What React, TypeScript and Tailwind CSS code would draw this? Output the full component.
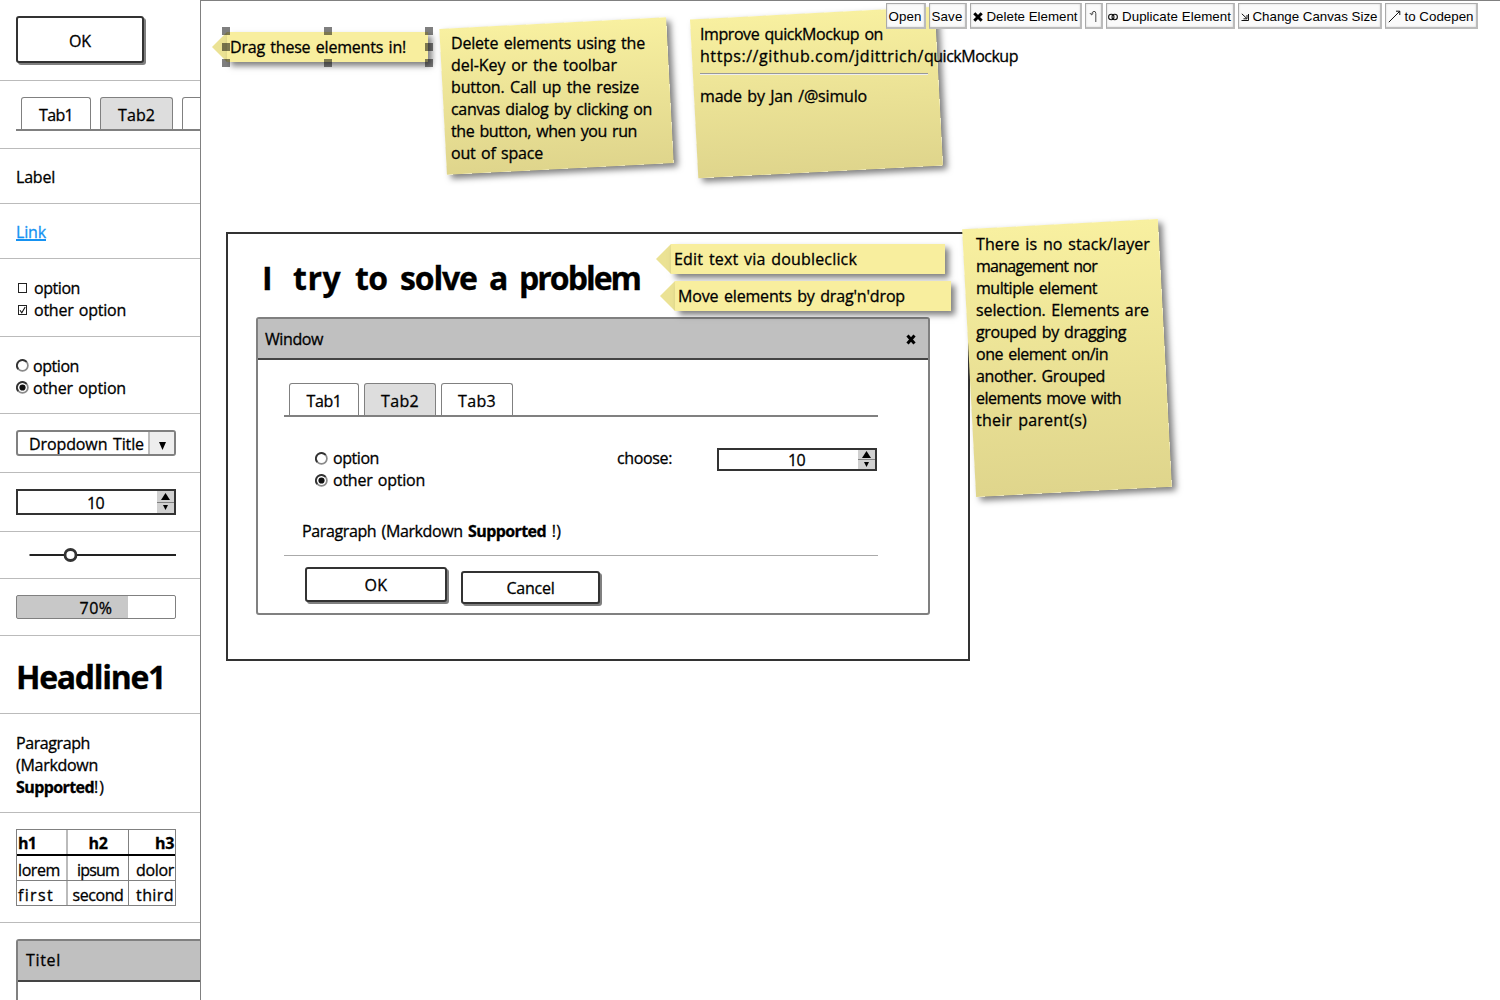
import { useLayoutEffect, useRef, type ReactNode } from "react";

/** A single line of text whose tracking is adjusted to fill `w` pixels. */
function T({ w, children, className = "" }: { w: number; children: string; className?: string }) {
  const ref = useRef<HTMLSpanElement>(null);
  useLayoutEffect(() => {
    const el = ref.current;
    if (!el) return;
    el.style.letterSpacing = "0px";
    const natural = el.getBoundingClientRect().width;
    el.style.letterSpacing = `${(w - natural) / children.length}px`;
  }, [w, children]);
  return (
    <span ref={ref} className={`inline-block whitespace-pre align-top ${className}`}>
      {children}
    </span>
  );
}

function Lines({ rows }: { rows: [string, number][] }) {
  return (
    <div className="flex flex-col items-start">
      {rows.map(([text, w]) => (
        <T key={text} w={w}>{text}</T>
      ))}
    </div>
  );
}

function Section({ className, children }: { className: string; children: ReactNode }) {
  return <section className={`shrink-0 border-b border-[#bbb] pl-4 ${className}`}>{children}</section>;
}

function Btn({ className, children }: { className: string; children: ReactNode }) {
  return (
    <div className={`flex justify-center rounded-[3px] border-2 border-[#333] bg-white shadow-[2px_2px_0_#808080] ${className}`}>
      {children}
    </div>
  );
}

function Tab({ label, w = 38, className }: { label?: string; w?: number; className: string }) {
  return (
    <div className={`flex h-8 shrink-0 justify-center rounded-t-[3px] border border-b-0 border-[#808080] pt-[6px] ${className}`}>
      {label && <T w={w}>{label}</T>}
    </div>
  );
}

function Radio({ checked = false }: { checked?: boolean }) {
  return (
    <svg width="13" height="13" viewBox="0 0 13 13" className="shrink-0">
      <circle cx="6.5" cy="6.5" r="5.4" fill="#fff" stroke="#8a8a8a" strokeWidth="1.7" />
      <path d="M2.2 10.2A5.5 5.5 0 0 1 10.6 2.9" fill="none" stroke="#333" strokeWidth="1.8" />
      {checked && <circle cx="6.5" cy="6.5" r="3.1" fill="#111" />}
    </svg>
  );
}

function Check({ checked = false }: { checked?: boolean }) {
  return (
    <svg width="9" height="10" viewBox="0 0 9 10" className="shrink-0">
      <rect x="0.5" y="0.5" width="8" height="9" fill="none" stroke="#222" />
      {checked && <path d="M2 5.2L3.8 7.8L7.2 2" fill="none" stroke="#111" strokeWidth="1.1" />}
    </svg>
  );
}

function Spinner({ className, valueClass }: { className: string; valueClass: string }) {
  return (
    <div className={`flex w-40 border-2 border-[#333] bg-white ${className}`}>
      <div className={`flex flex-1 justify-center pl-4 ${valueClass}`}><T w={17}>10</T></div>
      <div className="flex w-[17px] flex-col bg-[#d0d0d0]">
        <div className="flex flex-1 items-center justify-center border-b border-[#808080]">
          <svg width="9" height="7" viewBox="0 0 9 7"><path d="M4.5 0L9 7H0Z" /></svg>
        </div>
        <div className="flex flex-1 items-center justify-center">
          <svg width="5" height="5" viewBox="0 0 5 5"><path d="M0 0H5L2.5 5Z" /></svg>
        </div>
      </div>
    </div>
  );
}

function Tag({ className, children }: { className: string; children: ReactNode }) {
  return (
    <div className={`absolute flex h-[30px] ${className}`}>
      <svg width="15" height="30" viewBox="0 0 15 30" className="shrink-0"><path d="M15 0V30L0 15Z" fill="#ebe294" /></svg>
      <div className="flex-1 bg-[#f8ee9e] pl-[3px] pt-1 shadow-[4px_4px_6px_rgba(0,0,0,0.5)]">{children}</div>
    </div>
  );
}

function Paper({ className }: { className: string }) {
  return (
    <div className={`absolute -rotate-3 bg-linear-to-b from-[#f8f0a0] to-[#dfd58c] shadow-[4px_4px_6px_rgba(0,0,0,0.5)] ${className}`} />
  );
}

function Tool({ className, children }: { className: string; children: ReactNode }) {
  return (
    <button className={`flex h-[26px] items-center justify-center gap-1 whitespace-nowrap border border-r-2 border-b-2 border-t-[#aaa] border-l-[#aaa] border-r-[#bbb] border-b-[#bbb] bg-[#fafafa] pt-[2px] shadow-[inset_0_0_2px_#ccc] ${className}`}>
      {children}
    </button>
  );
}

const handles = [
  "left-[22px] top-[27px]", "left-[123.5px] top-[27px]", "left-[225px] top-[27px]",
  "left-[22px] top-[43px]", "left-[225px] top-[43px]",
  "left-[22px] top-[59px]", "left-[123.5px] top-[59px]", "left-[225px] top-[59px]",
];

function Sidebar() {
  return (
    <aside className="flex h-full w-[200px] shrink-0 flex-col overflow-hidden bg-white">
      <Section className="h-[81px] pt-4">
        <Btn className="h-[47px] w-32 pt-[12px]"><T w={22}>OK</T></Btn>
      </Section>
      <Section className="h-[68px] pt-4">
        <div className="flex h-[34px] w-[260px] items-end gap-[9px] border-b-2 border-[#808080] pl-[5px]">
          <Tab label="Tab1" w={34} className="w-[70px] bg-white" />
          <Tab label="Tab2" w={37} className="w-[73px] bg-[#ddd]" />
          <Tab className="w-[73px] bg-white" />
        </div>
      </Section>
      <Section className="h-[55px] pt-[17px]"><T w={39}>Label</T></Section>
      <Section className="h-[55px] pt-[17px]">
        <T w={30} className="text-[#1592f2] underline decoration-[1.5px] underline-offset-1">Link</T>
      </Section>
      <Section className="h-[78px] pt-[18px]">
        <div className="flex items-center gap-[7px] pl-[2px]"><Check /><T w={46}>option</T></div>
        <div className="flex items-center gap-[7px] pl-[2px]"><Check checked /><T w={92}>other option</T></div>
      </Section>
      <Section className="h-[77px] pt-[17.5px]">
        <div className="flex items-center gap-[4px]"><Radio /><T w={46}>option</T></div>
        <div className="flex items-center gap-[4px]"><Radio checked /><T w={93}>other option</T></div>
      </Section>
      <Section className="h-[59px] pt-4">
        <div className="flex h-[26px] w-40 overflow-hidden rounded-[3px] border-2 border-[#808080] bg-white">
          <div className="flex-1 pl-[11px] pt-px"><T w={115}>Dropdown Title</T></div>
          <div className="flex w-[26px] items-center justify-center border-l-2 border-[#bbb] bg-[#eee] pt-[6px]">
            <svg width="7" height="8" viewBox="0 0 7 8"><path d="M0 0H7L3.5 8Z" /></svg>
          </div>
        </div>
      </Section>
      <Section className="h-[59px] pt-4"><Spinner className="h-[26px]" valueClass="pt-px" /></Section>
      <Section className="h-[47px] pt-[15px]">
        <svg width="160" height="16" viewBox="0 0 160 16">
          <path d="M13.5 8H160" stroke="#222" strokeWidth="2" />
          <circle cx="54.5" cy="8" r="5.5" fill="#fff" stroke="#333" strokeWidth="2.8" />
        </svg>
      </Section>
      <Section className="h-[57px] pt-4">
        <div className="flex h-6 w-40 justify-center rounded-[2px] border border-[#808080] bg-linear-to-r from-[#c8c8c8] from-70% to-white to-70% pt-px">
          <T w={33}>70%</T>
        </div>
      </Section>
      <Section className="h-[78px] pt-[19px]">
        <T w={149} className="text-[32px] font-bold leading-[44px]">Headline1</T>
      </Section>
      <Section className="h-[99px] pt-[18px]">
        <Lines rows={[["Paragraph", 74], ["(Markdown", 82]]} />
        <div className="flex"><T w={78} className="font-bold">Supported</T><T w={11}>!)</T></div>
      </Section>
      <Section className="h-[110px] pt-4">
        <div className="w-40 border border-[#808080]">
          <div className="flex h-[26px] border-b-2 border-black font-bold">
            <div className="w-[51px] border-r-2 border-[#bbb] pl-px pt-[2px]"><T w={18}>h1</T></div>
            <div className="flex w-[61px] justify-center border-r border-[#808080] pt-[2px]"><T w={19}>h2</T></div>
            <div className="flex flex-1 justify-end pr-px pt-[2px]"><T w={19}>h3</T></div>
          </div>
          <div className="flex h-[25px] border-b border-[#808080]">
            <div className="w-[51px] border-r-2 border-[#bbb] pl-px pt-[3px]"><T w={42}>lorem</T></div>
            <div className="flex w-[61px] justify-center border-r border-[#808080] pt-[3px]"><T w={42}>ipsum</T></div>
            <div className="flex flex-1 justify-end pr-px pt-[3px]"><T w={38}>dolor</T></div>
          </div>
          <div className="flex h-6">
            <div className="w-[51px] border-r-2 border-[#bbb] pl-px pt-[3px]"><T w={36}>first</T></div>
            <div className="flex w-[61px] justify-center border-r border-[#808080] pt-[3px]"><T w={51}>second</T></div>
            <div className="flex flex-1 justify-end pr-px pt-[3px]"><T w={38}>third</T></div>
          </div>
        </div>
      </Section>
      <div className="shrink-0 pl-4 pt-4">
        <div className="h-[200px] w-[300px] rounded-[3px] border-2 border-[#808080] bg-white">
          <div className="h-[41px] border-b-2 border-[#444] bg-[#c0c0c0] pl-2 pt-[8px]"><T w={35}>Titel</T></div>
        </div>
      </div>
    </aside>
  );
}

function MockWindow() {
  return (
    <div className="absolute left-[56px] top-[317px] h-[298px] w-[674px] rounded-[3px] border-2 border-[#808080] bg-white">
      <div className="flex h-[41px] items-start justify-between border-b-2 border-[#444] bg-[#c0c0c0] pl-[7px] pr-3 pt-[9px]">
        <T w={58}>Window</T>
        <svg width="10" height="11" viewBox="0 0 10 11" className="mt-[6px]">
          <path d="M1.5 1.5L8.5 9.5M8.5 1.5L1.5 9.5" stroke="#000" strokeWidth="3" />
        </svg>
      </div>
      <div className="pl-[26px] pt-[23px]">
        <div className="flex h-[34px] w-[594px] items-end gap-[5px] border-b-2 border-[#808080] pl-[5px]">
          <Tab label="Tab1" w={35} className="w-[70px] bg-white" />
          <Tab label="Tab2" w={38} className="w-[72px] bg-[#ddd]" />
          <Tab label="Tab3" w={38} className="w-[72px] bg-white" />
        </div>
        <div className="flex w-[594px] pl-[31px] pt-[30px]">
          <div className="w-[302px]">
            <div className="flex items-center gap-[5px]"><Radio /><T w={46}>option</T></div>
            <div className="flex items-center gap-[5px]"><Radio checked /><T w={92}>other option</T></div>
          </div>
          <div className="w-[100px]"><T w={55}>choose:</T></div>
          <div className="pt-px"><Spinner className="h-[23px]" valueClass="-mt-px" /></div>
        </div>
        <div className="flex w-[594px] border-b border-[#aaa] pb-[13px] pl-[18px] pt-[29px]">
          <T w={166}>{"Paragraph (Markdown "}</T>
          <T w={78} className="font-bold">Supported</T>
          <T w={15}>{" !)"}</T>
        </div>
        <div className="flex gap-[14px] pl-[21px] pt-[11px]">
          <Btn className="h-[35px] w-[142px] pt-[5px]"><T w={23}>OK</T></Btn>
          <Btn className="mt-1 h-[33px] w-[139px] pt-[4px]"><T w={48}>Cancel</T></Btn>
        </div>
      </div>
    </div>
  );
}

export default function App() {
  return (
    <div className="flex h-[1000px] w-[1500px] overflow-hidden bg-white text-[16px] leading-[22px] text-black [-webkit-text-stroke:0.3px] [font-family:'Open_Sans','Noto_Sans',sans-serif] [word-spacing:1.5px]">
      <Sidebar />
      <main className="relative flex-1 overflow-hidden bg-white">
        <div className="absolute left-[26px] top-[232px] h-[429px] w-[744px] border-2 border-[#333]" />
        <h1 className="absolute left-[62px] top-[256px] flex text-[32px] font-bold leading-[44px] [word-spacing:5px]">
          <T w={31}>{"I "}</T>
          <T w={62}>{"try "}</T>
          <T w={45}>{"to "}</T>
          <T w={89}>{"solve "}</T>
          <T w={30}>{"a "}</T>
          <T w={121}>problem</T>
        </h1>
        <MockWindow />

        <Tag className="left-[12px] top-[32px] w-[216px]"><T w={176}>Drag these elements in!</T></Tag>
        <Tag className="left-[456px] top-[244px] w-[289px]"><T w={183}>Edit text via doubleclick</T></Tag>
        <Tag className="left-[460px] top-[281px] w-[291px]"><T w={227}>Move elements by drag'n'drop</T></Tag>
        {handles.map((pos) => (
          <div key={pos} className={`absolute size-2 bg-black/50 ${pos}`} />
        ))}

        <Paper className="left-[243px] top-[23px] h-[146px] w-[227px]" />
        <div className="absolute left-[251px] top-[32px]">
          <Lines rows={[
            ["Delete elements using the", 194],
            ["del-Key or the toolbar", 166],
            ["button. Call up the resize", 188],
            ["canvas dialog by clicking on", 201],
            ["the button, when you run", 186],
            ["out of space", 92],
          ]} />
        </div>

        <Paper className="left-[494px] top-[13px] h-[159px] w-[245px]" />
        <div className="absolute left-[500px] top-[23px] w-[228px]">
          <div className="flex flex-col items-start">
            <T w={183}>Improve quickMockup on</T>
            <div className="flex"><T w={224}>https://github.com/jdittrich/</T><T w={94}>quickMockup</T></div>
          </div>
          <hr className="mb-[10px] mt-[6px] h-[2px] border-t border-b border-t-[#999] border-b-[#eee]" />
          <T w={167}>made by Jan /@simulo</T>
        </div>

        <Paper className="left-[769px] top-[224px] h-[268px] w-[196px]" />
        <div className="absolute left-[776px] top-[233px]">
          <Lines rows={[
            ["There is no stack/layer", 174],
            ["management nor", 121],
            ["multiple element", 121],
            ["selection. Elements are", 173],
            ["grouped by dragging", 150],
            ["one element on/in", 132],
            ["another. Grouped", 129],
            ["elements move with", 145],
            ["their parent(s)", 111],
          ]} />
        </div>

        <div className="absolute inset-0 border-l border-t border-[#808080]" />

        <div className="absolute left-[685.5px] top-[3px] flex gap-[3px] text-[13.33px] leading-none [-webkit-text-stroke:0px] [font-family:'Liberation_Sans',Arial,sans-serif] [word-spacing:0px]">
          <Tool className="w-10"><T w={33}>Open</T></Tool>
          <Tool className="w-[38px]"><T w={31}>Save</T></Tool>
          <Tool className="w-[112px]">
            <svg width="10" height="10" viewBox="0 0 10 10"><path d="M1.3 1.3L8.7 8.7M8.7 1.3L1.3 8.7" stroke="#000" strokeWidth="3" /></svg>
            <T w={91}>Delete Element</T>
          </Tool>
          <Tool className="w-[18px]">
            <svg width="8" height="13" viewBox="0 0 8 13" fill="none" stroke="#333" strokeWidth="0.9"><path d="M6.8 12V3.5Q6.8 1.3 5 1.3Q3.2 1.3 2.6 4.5M0.8 3L2.6 4.9L4.4 3.2" /></svg>
          </Tool>
          <Tool className="w-[129px]">
            <svg width="10" height="8" viewBox="0 0 10 8" fill="none" stroke="#111" strokeWidth="1.1"><ellipse cx="3.3" cy="4" rx="2.7" ry="2.7" /><ellipse cx="6.7" cy="4" rx="2.7" ry="2.7" /></svg>
            <T w={109}>Duplicate Element</T>
          </Tool>
          <Tool className="w-[144px]">
            <svg width="8" height="8" viewBox="0 0 8 8" fill="none" stroke="#111" strokeWidth="1"><path d="M0.8 0.8L5.5 5.2M2.5 5.8H6V2M0.5 7.5H7.5V1" /></svg>
            <T w={125}>Change Canvas Size</T>
          </Tool>
          <Tool className="w-[93px]">
            <svg width="13" height="13" viewBox="0 0 13 13" fill="none" stroke="#111" strokeWidth="1"><path d="M0.8 12.2L11.8 1.2M8 1.2H11.8V5" /></svg>
            <T w={69}>to Codepen</T>
          </Tool>
        </div>
      </main>
    </div>
  );
}
